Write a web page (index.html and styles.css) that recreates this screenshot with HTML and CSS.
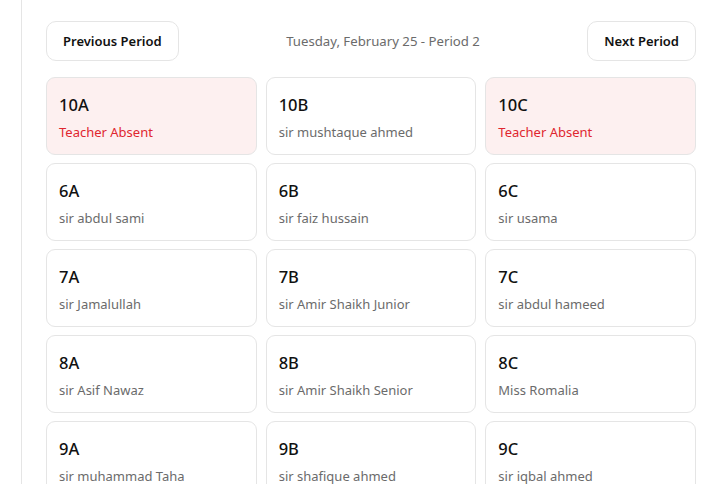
FILE: index.html
```html
<!DOCTYPE html>
<html>
<head>
<meta charset="utf-8">
<link rel="stylesheet" href="styles.css">
</head>
<body>
<div class="layout">
  <aside class="sidebar"></aside>
  <main class="main">
    <div class="toolbar">
      <button class="btn">Previous Period</button>
      <div class="date">Tuesday, February 25 - Period 2</div>
      <button class="btn">Next Period</button>
    </div>
    <div class="grid">
      <div class="card absent"><div class="cls">10A</div><div class="teacher">Teacher Absent</div></div>
      <div class="card"><div class="cls">10B</div><div class="teacher">sir mushtaque ahmed</div></div>
      <div class="card absent"><div class="cls">10C</div><div class="teacher">Teacher Absent</div></div>
      <div class="card"><div class="cls">6A</div><div class="teacher">sir abdul sami</div></div>
      <div class="card"><div class="cls">6B</div><div class="teacher">sir faiz hussain</div></div>
      <div class="card"><div class="cls">6C</div><div class="teacher">sir usama</div></div>
      <div class="card"><div class="cls">7A</div><div class="teacher">sir Jamalullah</div></div>
      <div class="card"><div class="cls">7B</div><div class="teacher">sir Amir Shaikh Junior</div></div>
      <div class="card"><div class="cls">7C</div><div class="teacher">sir abdul hameed</div></div>
      <div class="card"><div class="cls">8A</div><div class="teacher">sir Asif Nawaz</div></div>
      <div class="card"><div class="cls">8B</div><div class="teacher">sir Amir Shaikh Senior</div></div>
      <div class="card"><div class="cls">8C</div><div class="teacher">Miss Romalia</div></div>
      <div class="card"><div class="cls">9A</div><div class="teacher">sir muhammad Taha</div></div>
      <div class="card"><div class="cls">9B</div><div class="teacher">sir shafique ahmed</div></div>
      <div class="card"><div class="cls">9C</div><div class="teacher">sir iqbal ahmed</div></div>
    </div>
  </main>
</div>
</body>
</html>
```
FILE: styles.css
```css
* { box-sizing: border-box; }
html, body { margin: 0; padding: 0; background: #fff; overflow: hidden; }
body { font-family: "Noto Sans", "Open Sans", sans-serif; color: #111; }
.layout { display: flex; min-height: 484px; }
.sidebar { width: 22px; border-right: 1px solid #e5e5e5; flex-shrink: 0; }
.main { flex: 1; padding: 21px 7px 0 24px; }
.toolbar { display: flex; align-items: center; justify-content: space-between; height: 40px; }
.btn { font-family: inherit; font-size: 13px; font-weight: 600; color: #111; background: #fff; border: 1px solid #e5e5e5; border-radius: 10px; height: 40px; padding: 0 16px; }
.date { font-size: 13.2px; color: #6b6b6b; }
.grid { margin-top: 16px; display: grid; grid-template-columns: repeat(3, 1fr); gap: 8px 9px; }
.card { border: 1px solid #e5e5e5; border-radius: 9px; height: 78px; padding: 15px 12px; background: #fff; }
.card.absent { background: #fdf0f0; }
.cls { font-size: 16.5px; font-weight: 500; line-height: 24px; color: #111; }
.teacher { font-size: 13px; color: #6b6b6b; margin-top: 6px; line-height: 18px; }
.absent .teacher { color: #e0262f; }
```
